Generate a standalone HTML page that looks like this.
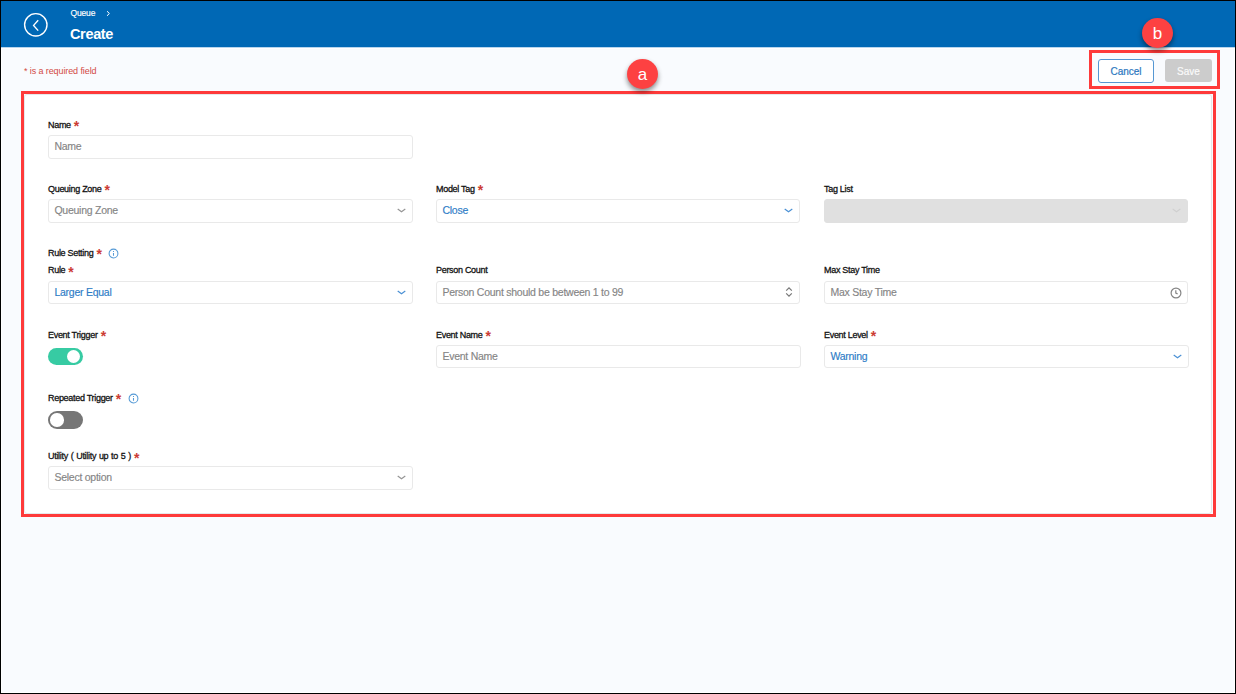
<!DOCTYPE html>
<html><head><meta charset="utf-8">
<style>
*{margin:0;padding:0;box-sizing:border-box}
html,body{width:1236px;height:694px;overflow:hidden;background:#000;font-family:"Liberation Sans",sans-serif}
#frame{position:absolute;left:1px;top:1px;width:1234px;height:692px;background:#fff}
#bg{position:absolute;left:2px;top:49px;width:1232px;height:643px;background:#f9fbfe}
#hl{position:absolute;left:1px;top:47px;width:1234px;height:1px;background:#b8d5ee}
#hdr{position:absolute;left:1px;top:1px;width:1234px;height:46px;background:#0068b5}
.abs{position:absolute}
.t{position:absolute;white-space:nowrap;line-height:1}
#card{position:absolute;left:23.5px;top:93.5px;width:1188.5px;height:420px;background:#fff;border:1px solid #e6e8ea;border-radius:3px}
.lbl{position:absolute;white-space:nowrap;line-height:1;font-size:9px;font-weight:normal;color:#111;letter-spacing:-0.3px;-webkit-text-stroke:0.28px #111}
.req{-webkit-text-stroke:0;color:#cc3b34;font-size:14px;line-height:0;font-weight:bold;position:relative;top:3.8px;margin-left:3px;letter-spacing:0}
.inp{position:absolute;height:24px;width:365px;background:#fff;border:1px solid #e9e9e9;border-radius:3px}
.ph{position:absolute;left:5.4px;top:4.6px;line-height:1;font-size:10.5px;color:#858585;white-space:nowrap;letter-spacing:-0.25px;-webkit-text-stroke:0.15px #858585}
.val{color:#2d7cc6!important;-webkit-text-stroke:0.15px #2d7cc6!important}
.chev{position:absolute;right:6px;top:7.8px;width:9px;height:5px}
.redbox{position:absolute;border:3px solid #fe3a3a}
.badge{position:absolute;width:31px;height:30px;border-radius:50%;background:#fd4142;color:#fff;font-size:17px;text-align:center;line-height:31px;box-shadow:0 3px 5px rgba(0,0,0,0.45)}
.info{position:absolute;width:11px;height:11px}
.tog{position:absolute;width:35px;height:17px;border-radius:9px}
.knob{position:absolute;top:2px;width:13.3px;height:13.3px;border-radius:50%;background:#fff}
</style></head>
<body>
<div id="frame"></div>
<div id="bg"></div>
<div id="hl"></div>
<div id="hdr">
  <svg class="abs" style="left:22px;top:11px" width="26" height="26" viewBox="0 0 26 26"><circle cx="12.8" cy="12.8" r="11.2" fill="none" stroke="#fff" stroke-width="1.4"/><path d="M15.2 8.3 L10.6 13.4 L15.2 18.6" fill="none" stroke="#fff" stroke-width="1.4"/></svg>
  <div class="t" style="left:69.5px;top:8px;font-size:8.5px;color:#fff;letter-spacing:-0.15px;-webkit-text-stroke:0.15px #fff">Queue</div>
  <svg class="abs" style="left:104.2px;top:8.6px" width="6" height="7" viewBox="0 0 6 7"><path d="M2 1.2 L4.4 3.5 L2 5.8" fill="none" stroke="#fff" stroke-width="1"/></svg>
  <div class="t" style="left:69px;top:26px;font-size:14.5px;font-weight:bold;color:#fff;letter-spacing:-0.35px">Create</div>
</div>

<div class="t" style="left:24px;top:66.7px;font-size:9px;color:#d34a45;letter-spacing:-0.1px">* is a required field</div>

<!-- buttons -->
<div class="abs" style="left:1098px;top:59px;width:56px;height:23.5px;border:1px solid #5597d3;border-radius:3px;background:#fff;color:#2a76be;font-size:10px;text-align:center;line-height:23px;-webkit-text-stroke:0.2px #2a76be">Cancel</div>
<div class="abs" style="left:1165px;top:59px;width:47px;height:23px;border-radius:3px;background:#cccccc;color:#fafafa;font-size:10px;text-align:center;line-height:25.2px;-webkit-text-stroke:0.2px #fafafa">Save</div>

<div id="card"></div>

<!-- FORM -->
<div class="lbl" style="left:48px;top:120.5px">Name<span class="req">*</span></div>
<div class="inp" style="left:48px;top:135px"><div class="ph">Name</div></div>

<div class="lbl" style="left:48px;top:184.6px">Queuing Zone<span class="req">*</span></div>
<div class="inp" style="left:48px;top:199px"><div class="ph">Queuing Zone</div><svg class="chev" viewBox="0 0 9 5"><path d="M0.7 1 L4.5 3.8 L8.3 1" fill="none" stroke="#959595" stroke-width="1.15"/></svg></div>

<div class="lbl" style="left:436px;top:184.5px">Model Tag<span class="req">*</span></div>
<div class="inp" style="left:436px;top:199px;width:364px"><div class="ph val">Close</div><svg class="chev" viewBox="0 0 9 5"><path d="M0.7 1 L4.5 3.8 L8.3 1" fill="none" stroke="#4a90d4" stroke-width="1.15"/></svg></div>

<div class="lbl" style="left:824px;top:184.5px">Tag List</div>
<div class="inp" style="left:824px;top:199px;width:364px;background:#e0e0e0;border-color:#e0e0e0"><svg class="chev" viewBox="0 0 9 5"><path d="M0.7 1 L4.5 3.8 L8.3 1" fill="none" stroke="#cfcfcf" stroke-width="1.1"/></svg></div>

<div class="lbl" style="left:48px;top:248.6px">Rule Setting<span class="req">*</span></div>
<svg class="info" style="left:108.3px;top:247.7px" viewBox="0 0 11 11"><circle cx="5.5" cy="5.5" r="4.4" fill="none" stroke="#559ad6" stroke-width="1.05"/><path d="M5.5 4.9 V7.8 M5.5 3 V4" stroke="#559ad6" stroke-width="1.05"/></svg>

<div class="lbl" style="left:48px;top:266.0px">Rule<span class="req">*</span></div>
<div class="inp" style="left:48px;top:281px;height:23px"><div class="ph val">Larger Equal</div><svg class="chev" viewBox="0 0 9 5"><path d="M0.7 1 L4.5 3.8 L8.3 1" fill="none" stroke="#4a90d4" stroke-width="1.15"/></svg></div>

<div class="lbl" style="left:436px;top:266.0px">Person Count</div>
<div class="inp" style="left:436px;top:281px;height:23px;width:364px"><div class="ph">Person Count should be between 1 to 99</div><svg class="abs" style="right:6.5px;top:4.3px" width="8" height="12" viewBox="0 0 8 12"><path d="M1.2 4.6 L4 1.8 L6.8 4.6 M1.2 7.4 L4 10.2 L6.8 7.4" fill="none" stroke="#767676" stroke-width="1.2"/></svg></div>

<div class="lbl" style="left:824px;top:266.0px">Max Stay Time</div>
<div class="inp" style="left:824px;top:281px;height:23px;width:364px"><div class="ph">Max Stay Time</div><svg class="abs" style="right:5px;top:4.5px" width="12" height="12" viewBox="0 0 12 12"><circle cx="6" cy="6" r="4.9" fill="none" stroke="#858585" stroke-width="1.2"/><path d="M5.8 3.2 V6.1 L7.6 6.9" fill="none" stroke="#858585" stroke-width="1.2"/></svg></div>

<div class="lbl" style="left:48px;top:330.6px">Event Trigger<span class="req">*</span></div>
<div class="tog" style="left:48px;top:348px;background:#37cba3"><div class="knob" style="left:19px"></div></div>

<div class="lbl" style="left:436px;top:330.6px">Event Name<span class="req">*</span></div>
<div class="inp" style="left:436px;top:345px;height:23px"><div class="ph">Event Name</div></div>

<div class="lbl" style="left:824px;top:330.6px">Event Level<span class="req">*</span></div>
<div class="inp" style="left:824px;top:345px;height:23px"><div class="ph val">Warning</div><svg class="chev" viewBox="0 0 9 5"><path d="M0.7 1 L4.5 3.8 L8.3 1" fill="none" stroke="#4a90d4" stroke-width="1.15"/></svg></div>

<div class="lbl" style="left:48px;top:393.5px">Repeated Trigger<span class="req">*</span></div>
<svg class="info" style="left:127.7px;top:393px" viewBox="0 0 11 11"><circle cx="5.5" cy="5.5" r="4.4" fill="none" stroke="#559ad6" stroke-width="1.05"/><path d="M5.5 4.9 V7.8 M5.5 3 V4" stroke="#559ad6" stroke-width="1.05"/></svg>
<div class="tog" style="left:48px;top:411px;height:17.8px;background:#767676"><div class="knob" style="left:2px;top:2.1px;width:13.6px;height:13.6px"></div></div>

<div class="lbl" style="left:48px;top:451.9px;word-spacing:0.6px">Utility ( Utility up to 5 )<span class="req">*</span></div>
<div class="inp" style="left:48px;top:466px"><div class="ph">Select option</div><svg class="chev" viewBox="0 0 9 5"><path d="M0.7 1 L4.5 3.8 L8.3 1" fill="none" stroke="#959595" stroke-width="1.15"/></svg></div>

<!-- annotations -->
<div class="redbox" style="left:21px;top:91px;width:1195px;height:426px"></div>
<div class="redbox" style="left:1089px;top:50px;width:131px;height:39px"></div>
<div class="badge" style="left:627px;top:59px">a</div>
<div class="badge" style="left:1142px;top:18px">b</div>
</body></html>
